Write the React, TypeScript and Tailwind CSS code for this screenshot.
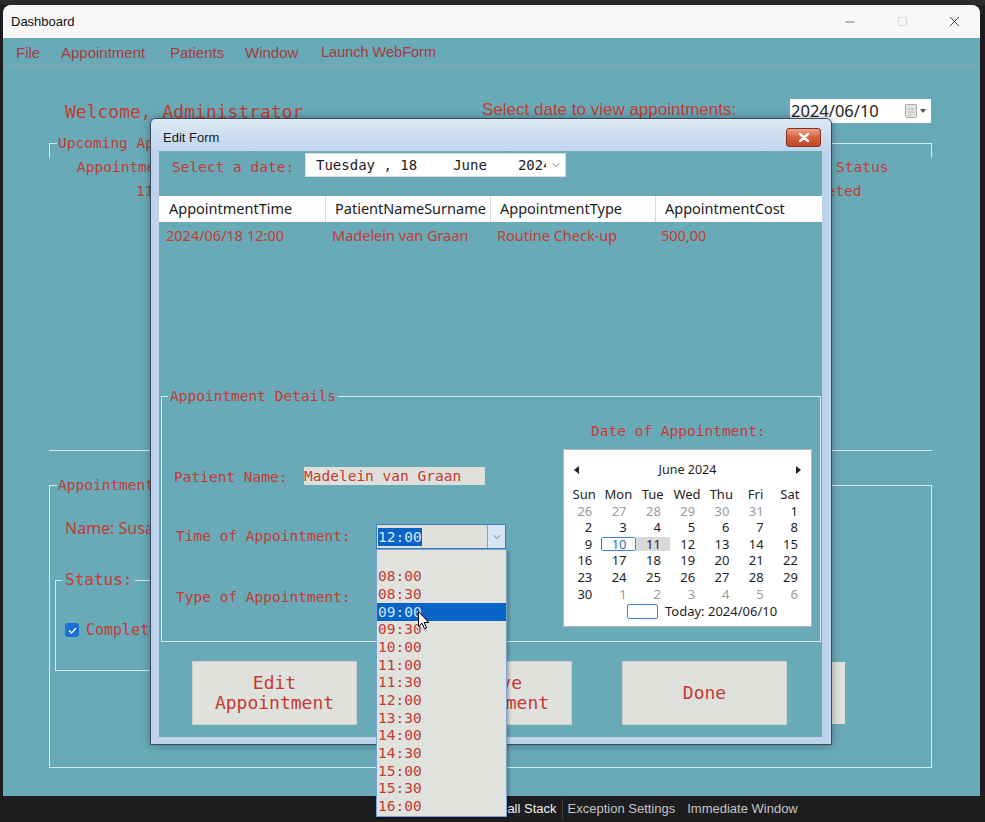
import { ChevronDown, Minus, Square, X } from "lucide-react";

const times = [
  "",
  "08:00",
  "08:30",
  "09:00",
  "09:30",
  "10:00",
  "11:00",
  "11:30",
  "12:00",
  "13:30",
  "14:00",
  "14:30",
  "15:00",
  "15:30",
  "16:00",
];

const weeks = [
  ["26", "27", "28", "29", "30", "31", "1"],
  ["2", "3", "4", "5", "6", "7", "8"],
  ["9", "10", "11", "12", "13", "14", "15"],
  ["16", "17", "18", "19", "20", "21", "22"],
  ["23", "24", "25", "26", "27", "28", "29"],
  ["30", "1", "2", "3", "4", "5", "6"],
];

const days = ["Sun", "Mon", "Tue", "Wed", "Thu", "Fri", "Sat"];

const isMuted = (week: number, day: number) =>
  (week === 0 && day < 6) || (week === 5 && day > 0);

const MonthCalendar = () => {
  return (
    <div className="mt-[8px] w-[249px] h-[178px] bg-white border border-[#b9b9b9] pt-[10px] font-['Noto_Sans',sans-serif] text-[#1e1e1e]">
      {/* Month header */}
      <div className="h-[20px] flex items-center justify-between px-[10px]">
        <svg width="5" height="8" viewBox="0 0 5 8">
          <polygon points="5,0 0,4 5,8" fill="#222" />
        </svg>
        <span className="text-[12.5px] leading-[20px]">June 2024</span>
        <svg width="5" height="8" viewBox="0 0 5 8">
          <polygon points="0,0 5,4 0,8" fill="#222" />
        </svg>
      </div>

      <div className="mt-[5px] ml-[3px] w-[240px] grid grid-cols-7 h-[18px] text-[13px] leading-[18px]">
        {days.map((d) => (
          <div key={d} className="text-center">
            {d}
          </div>
        ))}
      </div>

      {weeks.map((week, w) => (
        <div key={w} className="ml-[3px] w-[240px] grid grid-cols-7 h-[16.6px] text-[13px]">
          {week.map((n, d) => {
            if (w === 2 && d === 1) {
              return (
                <div
                  key={d}
                  className="h-[14px] my-[1.3px] border border-[#3d85d8] rounded-[2px] flex items-center justify-end pr-[8px] text-[#2a6cc0]"
                >
                  {n}
                </div>
              );
            }
            if (w === 2 && d === 2) {
              return (
                <div
                  key={d}
                  className="h-[14px] my-[1.3px] bg-[#d9d9d9] flex items-center justify-end pr-[9px]"
                >
                  {n}
                </div>
              );
            }
            return (
              <div
                key={d}
                className={`h-[16.6px] flex items-center justify-end pr-[9px] ${
                  isMuted(w, d) ? "text-[#9b9b9b]" : "text-[#1e1e1e]"
                }`}
              >
                {n}
              </div>
            );
          })}
        </div>
      ))}

      {/* Today */}
      <div className="h-[18px] flex items-center ml-[63px] gap-[7px]">
        <div className="w-[31px] h-[15px] border border-[#3d85d8] rounded-[2px]" />
        <span className="text-[13px]">Today: 2024/06/10</span>
      </div>
    </div>
  );
};

const EditForm = () => {
  return (
    <div className="absolute left-[150px] top-[118px] w-[682px] h-[627px] flex flex-col border border-[#3b4a5c] rounded-t-[6px] bg-[#bcd3eb] shadow-[0_0_8px_rgba(0,0,0,0.35)]">
      {/* Title bar */}
      <div className="h-[32px] shrink-0 flex items-start rounded-t-[5px] bg-gradient-to-b from-[#dde8f4] to-[#c0d5ec]">
        <span className="mt-[11px] ml-[12px] font-['Liberation_Sans',sans-serif] text-[13px] leading-[16px] text-[#1a1a1a]">
          Edit Form
        </span>
        <div className="ml-auto mt-[9px] mr-[10px] w-[35px] h-[19px] rounded-[3px] border border-[#86321f] bg-gradient-to-b from-[#eaa287] via-[#d5603f] to-[#c4462b] flex items-center justify-center">
          <svg width="10" height="9" viewBox="0 0 10 9">
            <path d="M1 1 L9 8 M9 1 L1 8" stroke="#fff" strokeWidth="2.4" strokeLinecap="round" />
          </svg>
        </div>
      </div>

      {/* Client area */}
      <div className="ml-[8px] w-[663px] h-[586px] bg-[#69aab8] font-['DejaVu_Sans_Mono',monospace] text-[#c53a33]">
        <div className="mt-[2px] h-[24px] flex items-start">
          <span className="w-[146px] pl-[13px] text-[14.5px] leading-[28px]">Select a date:</span>
          <div className="w-[261px] h-[24px] bg-white border border-[#dadada] flex items-center pl-[10px] text-[14px] text-[#1c1c1c] whitespace-pre">
            <span>Tuesday , 18</span>
            <span className="ml-[36px]">June</span>
            <span className="ml-[31px] w-[28px] overflow-hidden">2024</span>
            <ChevronDown className="ml-auto mr-[3px] text-[#555]" size={12} strokeWidth={1.5} />
          </div>
        </div>

        {/* Grid */}
        <div className="mt-[19px] h-[26px] bg-white flex items-center font-['Noto_Sans',sans-serif] text-[14.5px] text-[#1b1b1b]">
          <div className="w-[167px] h-full flex items-center pl-[10px] border-r border-[#dcdcdc]">AppointmentTime</div>
          <div className="w-[165px] h-full flex items-center pl-[9px] border-r border-[#dcdcdc]">PatientNameSurname</div>
          <div className="w-[165px] h-full flex items-center pl-[9px] border-r border-[#dcdcdc]">AppointmentType</div>
          <div className="flex-1 h-full flex items-center pl-[9px]">AppointmentCost</div>
        </div>
        <div className="h-[27px] flex items-center font-['Noto_Sans',sans-serif] text-[14.5px]">
          <div className="w-[167px] pl-[7px]">2024/06/18 12:00</div>
          <div className="w-[165px] pl-[6px]">Madelein van Graan</div>
          <div className="w-[165px] pl-[6px]">Routine Check-up</div>
          <div className="flex-1 pl-[5px]">500,00</div>
        </div>

        {/* Appointment details */}
        <fieldset className="mt-[137px] ml-[2px] w-[660px] h-[256px] border border-[#d2ecf0]">
          <legend className="ml-[6px] px-[2px] text-[14.5px] leading-[20px]">Appointment Details</legend>
          <div className="flex text-[14.5px]">
            <div className="w-[401px]">
              <div className="mt-[61px] h-[18px] flex items-center">
                <span className="w-[142px] pl-[12px] pt-[4px]">Patient Name:</span>
                <span className="w-[181px] h-[18px] bg-[#dee0db] leading-[18px]">Madelein van Graan</span>
              </div>
              <div className="mt-[39px] h-[25px] flex items-center">
                <span className="w-[214px] pl-[14px]">Time of Appointment:</span>
                <div className="w-[130px] h-[25px] border border-[#3d7ebd] bg-[#dee0db] flex">
                  <div className="flex-1 flex items-center pl-[1px]">
                    <span className="bg-[#0a64c8] text-[#d6e8ff] leading-[18px]">12:00</span>
                  </div>
                  <div className="w-[18px] h-full border-l border-[#7aa6d4] bg-[#d6e6f6] flex items-center justify-center">
                    <ChevronDown size={12} strokeWidth={1.5} className="text-[#555]" />
                  </div>
                </div>
              </div>
              <div className="mt-[36px] h-[25px] flex items-center">
                <span className="w-[214px] pl-[14px]">Type of Appointment:</span>
                <div className="w-[130px] h-[25px] bg-[#dee0db]" />
              </div>
            </div>
            <div className="w-[249px]">
              <div className="mt-[15px] h-[20px] pl-[28px] leading-[20px]">Date of Appointment:</div>
              <MonthCalendar />
            </div>
          </div>
        </fieldset>

        {/* Buttons */}
        <div className="mt-[19px] pl-[33px] flex gap-[50px]">
          {["Edit\nAppointment", "Remove\nAppointment", "Done"].map((label) => (
            <div
              key={label}
              className="w-[165px] h-[64px] bg-[#dfe1dc] border border-[#cdd0ca] flex items-center justify-center text-center text-[18px] leading-[20px] whitespace-pre-line"
            >
              {label}
            </div>
          ))}
        </div>
      </div>
    </div>
  );
};

const TimeDropdown = () => {
  return (
    <div className="absolute left-[376px] top-[549px] w-[131px] h-[268px] border border-[#7ba2d0] bg-[#dfe2dd] font-['DejaVu_Sans_Mono',monospace] text-[14.5px] text-[#c53a33] shadow-[2px_2px_3px_rgba(0,0,0,0.25)]">
      {times.map((t, i) => (
        <div
          key={i}
          className={`h-[17.7px] flex items-center pl-[1px] pt-[1px] ${
            t === "09:00" ? "bg-[#0a64c8] text-[#cfe3ff]" : ""
          }`}
        >
          {t}
        </div>
      ))}
    </div>
  );
};

export default function App() {
  const line = "border-[#d2ecf0]";

  return (
    <div className="relative w-[985px] h-[822px] overflow-hidden bg-[#1d1d1f] flex flex-col font-['Liberation_Sans',sans-serif]">
      <div className="h-[5px] shrink-0 bg-[#2a2a2d]" />

      {/* Dashboard window */}
      <div className="ml-[3px] w-[977px] h-[791px] shrink-0 flex flex-col rounded-t-[8px] overflow-hidden bg-[#69aab8]">
        <div className="h-[33px] shrink-0 bg-[#f8f8f8] flex items-center pl-[8px]">
          <span className="text-[13px] text-[#111]">Dashboard</span>
          <div className="ml-auto flex h-full">
            <div className="w-[52px] flex items-center justify-center">
              <Minus size={14} strokeWidth={1} className="text-[#222]" />
            </div>
            <div className="w-[52px] flex items-center justify-center">
              <Square size={11} strokeWidth={1} className="text-[#b5b5b5]" />
            </div>
            <div className="w-[52px] flex items-center justify-center">
              <X size={17} strokeWidth={1.2} className="text-[#222]" />
            </div>
          </div>
        </div>

        {/* Menu */}
        <div className="h-[28px] shrink-0 flex items-center pl-[13px] pt-[3px] border-b border-[#86a9b0] text-[15px] text-[#a53b3d]">
          <span className="w-[45px]">File</span>
          <span className="w-[109px]">Appointment</span>
          <span className="w-[75px]">Patients</span>
          <span className="w-[76px]">Window</span>
          <span className="text-[14.5px]">Launch WebForm</span>
        </div>

        {/* Content */}
        <div className="flex-1 font-['DejaVu_Sans_Mono',monospace] text-[#c53a33]">
          <div className="mt-[33px] h-[24px] flex items-center pl-[62px]">
            <span className="w-[417px] text-[18px]">Welcome, Administrator</span>
            <span className="w-[308px] font-['Liberation_Sans',sans-serif] text-[17px] pb-[2px]">
              Select date to view appointments:
            </span>
            <div className="w-[141px] h-[24px] bg-white flex items-center pl-[1px] font-['Noto_Sans',sans-serif] text-[16.5px] text-[#222]">
              2024/06/10
              <div className="ml-auto mr-[5px] flex items-center gap-[2px]">
                <svg width="13" height="15" viewBox="0 0 13 15">
                  <rect x="0.5" y="0.5" width="11" height="13" rx="1" fill="#e4e4e4" stroke="#a8a8a8" />
                  <path d="M3 5 H9 M3 8 H9 M3 11 H7" stroke="#b5b5b5" />
                </svg>
                <svg width="6" height="4" viewBox="0 0 6 4">
                  <polygon points="0,0 6,0 3,4" fill="#555" />
                </svg>
              </div>
            </div>
          </div>

          {/* Upcoming appointments */}
          <div className="ml-[46px] w-[883px] mt-[10px]">
            <fieldset className={`h-[25px] border-t border-x ${line}`}>
              <legend className="ml-[7px] px-[1px] text-[14.5px] leading-[20px]">Upcoming Appointments</legend>
            </fieldset>
            <div className={`h-[293px] border-b ${line} text-[14.5px]`}>
              <div className="h-[20px] flex items-center">
                <span className="w-[787px] pl-[28px]">AppointmentDate</span>
                <span>Status</span>
              </div>
              <div className="mt-[4px] h-[20px] flex items-center">
                <span className="w-[734px] pl-[87px]">11:00</span>
                <span>Completed</span>
              </div>
            </div>
          </div>

          {/* Appointment details (dashboard) */}
          <fieldset className={`mt-[24px] ml-[46px] w-[883px] h-[293px] border ${line}`}>
            <legend className="ml-[7px] px-[1px] text-[14.5px] leading-[20px]">Appointment Details</legend>
            <div className="flex">
              <div className="w-[420px]">
                <div className="mt-[23px] h-[20px] pl-[15px] font-['Noto_Sans',sans-serif] text-[16px] leading-[20px]">
                  Name: Susan Smith
                </div>
                <fieldset className={`mt-[32px] ml-[5px] w-[380px] h-[101px] border ${line}`}>
                  <legend className="ml-[6px] px-[3px] text-[16px] leading-[20px]">Status:</legend>
                  <div className="mt-[33px] ml-[9px] h-[14px] flex items-center">
                    <div className="w-[14px] h-[14px] rounded-[3px] bg-[#1b6fd6] flex items-center justify-center">
                      <svg width="9" height="7" viewBox="0 0 9 7">
                        <path d="M1 3.5 L3.5 6 L8 1" stroke="#fff" strokeWidth="1.4" fill="none" />
                      </svg>
                    </div>
                    <span className="ml-[7px] text-[15px]">Completed</span>
                  </div>
                </fieldset>
              </div>
              <div className="flex-1 flex justify-end">
                <div className="mt-[167px] mr-[86px] w-[165px] h-[62px] bg-[#dfe1dc]" />
              </div>
            </div>
          </fieldset>
        </div>
      </div>

      {/* IDE bottom bar */}
      <div className="flex-1 flex items-center text-[13px] text-[#c4c4c4]">
        <span className="ml-[493px] px-[5px] text-[#f0f0f0] border-r border-[#3e3e42]">Call Stack</span>
        <span className="ml-[5px]">Exception Settings</span>
        <span className="ml-[12px]">Immediate Window</span>
      </div>

      <EditForm />
      <TimeDropdown />

      {/* Mouse pointer */}
      <svg className="absolute left-[418px] top-[611px]" width="12" height="19" viewBox="0 0 12 19">
        <path d="M0.5 0.5 L0.5 15.5 L4 12.2 L6.6 18 L8.6 17.1 L6.1 11.5 L10.8 11.5 Z" fill="#fff" stroke="#000" strokeWidth="1" />
      </svg>
    </div>
  );
}
